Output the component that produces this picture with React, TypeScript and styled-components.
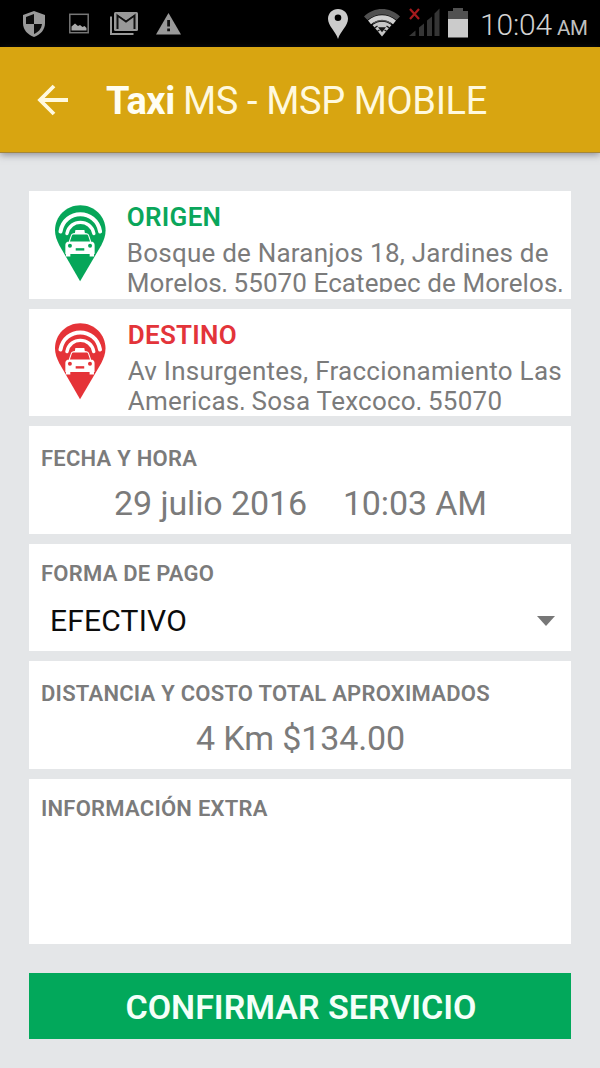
import React from 'react';
import styled, { createGlobalStyle } from 'styled-components';

const GlobalStyle = createGlobalStyle`
  * { box-sizing: border-box; }
  body {
    margin: 0;
    background: #e4e6e8;
    font-family: Roboto, "Liberation Sans", sans-serif;
  }
`;

const Screen = styled.div`
  display: flex;
  flex-direction: column;
  width: 600px;
  height: 1068px;
  overflow: hidden;
  background: #e4e6e8;
`;

const StatusBar = styled.header`
  display: flex;
  justify-content: space-between;
  height: 47px;
  padding: 0 12px 0 23px;
  background: #000;
`;

const StatusGroup = styled.div`
  display: flex;
  align-items: flex-start;
  height: 47px;
`;

const StatusIcon = styled.svg<{ $top: number; $gap: number }>`
  display: block;
  flex: none;
  margin-top: ${(p) => p.$top}px;
  margin-right: ${(p) => p.$gap}px;
`;

const Clock = styled.div`
  display: flex;
  align-items: baseline;
  width: 108px;
  color: #d2d2d2;
  font-size: 30px;
  font-weight: 300;
  line-height: 49px;
  letter-spacing: -0.2px;
  white-space: nowrap;
`;

const Meridiem = styled.span`
  margin-left: 5px;
  color: #c0c0c0;
  font-size: 20.5px;
  font-weight: 400;
`;

const AppBar = styled.div`
  display: flex;
  align-items: center;
  height: 106px;
  flex: none;
  padding: 1px 0 0 37px;
  background: #d8a511;
  border-bottom: 1px solid #a48639;
  box-shadow: 0 2px 7px rgba(60, 60, 75, 0.5);
`;

const BackButton = styled.button`
  display: flex;
  width: 69px;
  padding: 0;
  border: 0;
  background: none;
`;

const Title = styled.h1`
  margin: 0;
  padding-top: 1px;
  color: #fff9df;
  font-size: 38px;
  font-weight: 400;
  line-height: 50px;
  letter-spacing: -0.38px;
  white-space: nowrap;
`;

const Brand = styled.b`
  margin-right: 8px;
  font-weight: 700;
  color: #fffef2;
`;

const Form = styled.main`
  display: flex;
  flex-direction: column;
  gap: 10px;
  padding: 38px 29px 0;
`;

const Card = styled.section<{ $height?: number }>`
  height: ${(p) => p.$height ?? 107.6}px;
  padding: 0 12px;
  overflow: hidden;
  background: #fff;
`;

const PlaceCard = styled(Card)`
  display: flex;
  padding: 14px 0 0 26px;
`;

const PlaceText = styled.div<{ $indent: number }>`
  width: 446px;
  margin-left: ${(p) => p.$indent}px;
`;

const PlaceTitle = styled.h2<{ $color: string }>`
  margin: -1px 0 0;
  color: ${(p) => p.$color};
  font-size: 26px;
  font-weight: 600;
  line-height: 26px;
  letter-spacing: 0.3px;
`;

const Address = styled.p`
  height: 54px;
  margin: 8px 0 0;
  overflow: hidden;
  color: #7b7b7b;
  font-size: 26px;
  line-height: 30px;
  white-space: nowrap;
`;

const AddressLine = styled.span<{ $tracking: number }>`
  display: block;
  letter-spacing: ${(p) => p.$tracking}px;
`;

const Label = styled.h2<{ $top: number }>`
  margin: 0;
  padding-top: ${(p) => p.$top}px;
  color: #7b7b7b;
  font-size: 22px;
  font-weight: 600;
  line-height: 26px;
  letter-spacing: 0.24px;
  white-space: nowrap;
`;

const Value = styled.div`
  display: flex;
  justify-content: center;
  gap: 36px;
  margin-top: 11px;
  padding-left: 1px;
  color: #7b7b7b;
  font-size: 34px;
  line-height: 40px;
  letter-spacing: -0.12px;
  white-space: nowrap;
`;

const Select = styled.div`
  display: flex;
  align-items: center;
  justify-content: space-between;
  margin-top: 14px;
  padding: 0 4px 0 9px;
  color: #0c0c0c;
  font-size: 30px;
  line-height: 40px;
  letter-spacing: 0.2px;
`;

const ConfirmButton = styled.button`
  height: 66px;
  margin-top: 19px;
  padding: 3px 0 0 2px;
  border: 0;
  background: #02a85b;
  color: #f4fff9;
  font-family: inherit;
  font-size: 34px;
  font-weight: 600;
  line-height: 40px;
  white-space: nowrap;
`;

function TaxiPin({ color }: { color: string }) {
  return (
    <svg width="51" height="77" viewBox="0 0 51 77">
      <path d="M25.4 0C11.4 0 0 11.2 0 25.2c0 5.800 1.800 10 4.300 15L25.200 76.500 46.500 40.200c2.500-5 4.300-9.200 4.300-15C50.800 11.200 39.400 0 25.400 0z" fill={color} />
      <g fill="none" stroke="#fff" strokeLinecap="round">
        <path d="M5.500 26.500C9.500 3.500 41.300 3.500 45.300 26.500" strokeWidth="4" />
        <path d="M12 28.500C15 13.500 36 13.500 39 28.500" strokeWidth="3.400" />
      </g>
      <path d="M16 26.500h19v6H16z" fill={color} />
      <path d="M20 28l.5-3h9l.5 3c2.800 0 3.800.9 4.400 2.600l2 6.200h1.400c1.500.8 2 2 2 3.700V49h-.6v2.500h-4.400V49H15.400v2.500H11V49h-.6v-8.500c0-1.700.5-2.900 2-3.700h1.400l2-6.200c.6-1.700 1.600-2.600 4.200-2.600z" fill="#fff" />
      <path d="M18.400 29.500h13.400c.8 0 1.300.4 1.500 1.100l1.900 5.900H15l1.900-5.900c.2-.7.700-1.100 1.500-1.100z" fill={color} />
      <circle cx="15" cy="40.800" r="2" fill={color} />
      <circle cx="35.200" cy="40.800" r="2" fill={color} />
      <rect x="20.800" y="43.200" width="8.600" height="2.400" fill={color} />
    </svg>
  );
}

function NotificationIcons() {
  const grey = '#999';
  return (
    <StatusGroup>
      <StatusIcon $top={11} $gap={24} width="22" height="26" viewBox="0 0 22 26">
        <path d="M11 0L22 4v8c0 7-4.500 11.500-11 14C4.500 23.500 0 19 0 12V4z" fill={grey} />
        <path d="M11 3v10H3V6zM11 13h8c-.7 5-3.500 8-8 10z" fill="#0b0b0b" />
      </StatusIcon>
      <StatusIcon $top={13} $gap={21} width="20" height="21" viewBox="0 0 20 21">
        <rect x=".8" y="1.300" width="18.400" height="18.400" fill="none" stroke="#777" strokeWidth="1.500" />
        <path d="M2.500 17.500v-4l3.500-3 3 2.500 2-1 2.500 2 2-1 2 2v2.500z" fill="#aaa" />
      </StatusIcon>
      <StatusIcon $top={12} $gap={18} width="28" height="23" viewBox="0 0 28 23">
        <path d="M1 4.500V22h22.500" fill="none" stroke={grey} strokeWidth="2" />
        <rect x="4" y="0" width="24" height="19" rx="1.500" fill={grey} />
        <path d="M7.500 17V3.500l8.500 6 8.500-6V17" fill="none" stroke="#111" strokeWidth="2" />
        <path d="M7 2h18l-9 6z" fill={grey} />
      </StatusIcon>
      <StatusIcon $top={13} $gap={0} width="25" height="22" viewBox="0 0 25 22">
        <path d="M12.500 0L25 21.500H0z" fill={grey} />
        <path d="M11.200 7h2.800v6.500h-2.800zM11.200 15.500h2.800v2.800h-2.800z" fill="#111" />
      </StatusIcon>
    </StatusGroup>
  );
}

function SystemIcons() {
  return (
    <StatusGroup>
      <StatusIcon $top={9} $gap={16} width="20" height="30" viewBox="0 0 20 30">
        <path fillRule="evenodd" d="M10 0C4.300 0 0 4.300 0 9.800 0 17 7.500 22 10 30 12.500 22 20 17 20 9.800 20 4.300 15.700 0 10 0zm0 5.500a3.300 3.300 0 110 6.600 3.300 3.300 0 010-6.600z" fill="#cbcbcb" />
      </StatusIcon>
      <StatusIcon $top={9} $gap={9} width="36" height="28" viewBox="0 0 36 28">
        <path d="M0 7.500C10-2.500 26-2.500 36 7.500L32.500 11C24 3.500 12 3.500 3.500 11z" fill="#505050" />
        <path d="M4 11.500C12 4.500 24 4.500 32 11.500L29 15.200C22.500 10 13.500 10 7 15.200z" fill="#d0d0d0" />
        <path d="M8.500 16C14.500 11.500 21.500 11.500 27.500 16L18 27.500z" fill="#c6c6c6" />
        <path d="M9 14.300C14.500 10.800 21.500 10.800 27 14.300" fill="none" stroke="#555" strokeWidth="1.200" />
        <path d="M14 18.200h8l-4 5z" fill="#151515" />
        <path d="M10.500 19l3-2M25.500 19l-3-2M13 22.500l2.500-1.500M23 22.500L20.500 21" fill="none" stroke="#151515" strokeWidth="1.400" />
      </StatusIcon>
      <StatusIcon $top={8} $gap={8} width="31" height="29" viewBox="0 0 31 29">
        <path d="M0 28l6.500-5.500V28zM10 19.500l5-4V28h-5zM18 12.500l5-4V28h-5zM25.500 5.500l5-5V28h-5z" fill="#353535" />
        <path d="M1 1l9 10M10 1L1 11" stroke="#a51a1d" strokeWidth="2.200" />
      </StatusIcon>
      <StatusIcon $top={8} $gap={12} width="20" height="30" viewBox="0 0 20 30">
        <path d="M5 0h10v3h5v8H0V3h5z" fill="#515151" />
        <path d="M0 11h20v18.500H0z" fill="#cbcbcb" />
      </StatusIcon>
      <Clock>
        10:04<Meridiem>AM</Meridiem>
      </Clock>
    </StatusGroup>
  );
}

export default function App() {
  return (
    <Screen>
      <GlobalStyle />
      <StatusBar>
        <NotificationIcons />
        <SystemIcons />
      </StatusBar>
      <AppBar>
        <BackButton aria-label="Atrás">
          <svg width="32" height="32" viewBox="0 0 32 32" fill="none" stroke="#fff9df" strokeWidth="3.800">
            <path d="M31 16H4M17 2L3 16l14 14" />
          </svg>
        </BackButton>
        <Title>
          <Brand>Taxi</Brand>MS - MSP MOBILE
        </Title>
      </AppBar>
      <Form>
        <PlaceCard>
          <TaxiPin color="#06a659" />
          <PlaceText $indent={21}>
            <PlaceTitle $color="#0aa65b">ORIGEN</PlaceTitle>
            <Address>
              <AddressLine $tracking={0.22}>Bosque de Naranjos 18, Jardines de</AddressLine>
              <AddressLine $tracking={0.08}>Morelos, 55070 Ecatepec de Morelos,</AddressLine>
            </Address>
          </PlaceText>
        </PlaceCard>
        <PlaceCard>
          <TaxiPin color="#e53338" />
          <PlaceText $indent={22}>
            <PlaceTitle $color="#e3343a">DESTINO</PlaceTitle>
            <Address>
              <AddressLine $tracking={0.27}>Av Insurgentes, Fraccionamiento Las</AddressLine>
              <AddressLine $tracking={0.25}>Americas, Sosa Texcoco, 55070</AddressLine>
            </Address>
          </PlaceText>
        </PlaceCard>
        <Card>
          <Label $top={20}>FECHA Y HORA</Label>
          <Value>
            <span>29 julio 2016</span>
            <span>10:03 AM</span>
          </Value>
        </Card>
        <Card>
          <Label $top={17}>FORMA DE PAGO</Label>
          <Select>
            EFECTIVO
            <svg width="18" height="10" viewBox="0 0 18 10">
              <path d="M0 0h18L9 10z" fill="#777" />
            </svg>
          </Select>
        </Card>
        <Card>
          <Label $top={20}>DISTANCIA Y COSTO TOTAL APROXIMADOS</Label>
          <Value>4 Km $134.00</Value>
        </Card>
        <Card $height={165}>
          <Label $top={17}>INFORMACIÓN EXTRA</Label>
        </Card>
        <ConfirmButton>CONFIRMAR SERVICIO</ConfirmButton>
      </Form>
    </Screen>
  );
}
